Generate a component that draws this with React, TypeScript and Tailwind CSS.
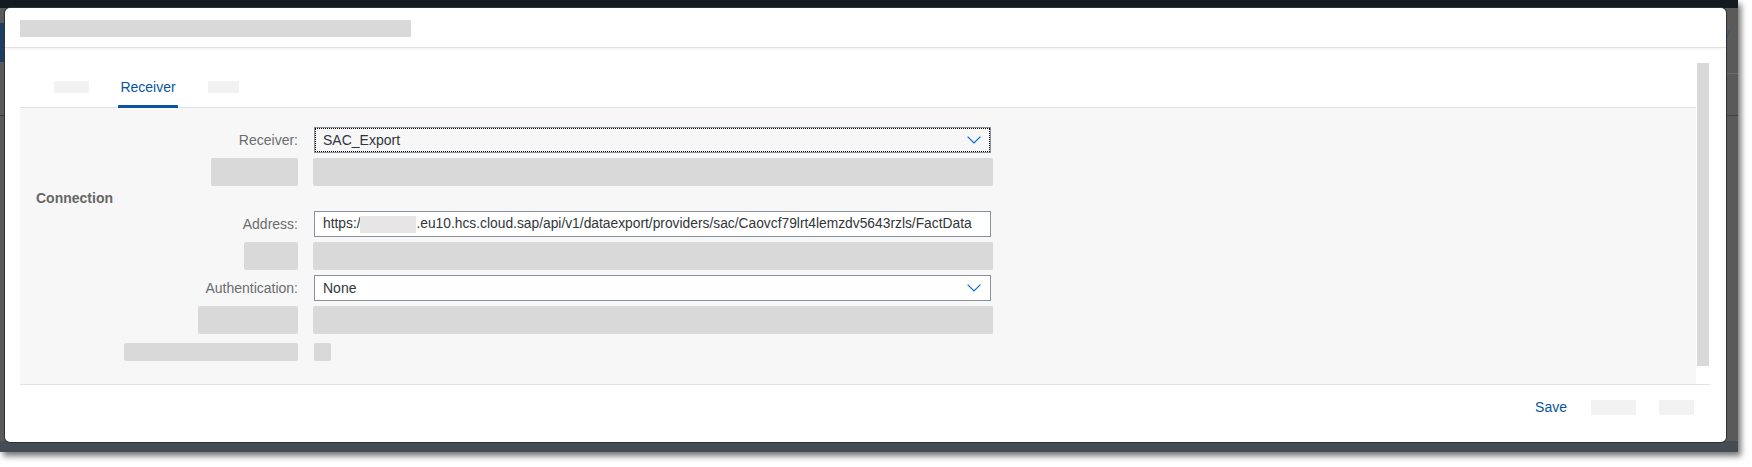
import React from "react"

const ph = "bg-[#d9d9d9] rounded-[2px]"

function Chevron() {
  return (
    <svg width="14" height="8" viewBox="0 0 14 8" className="shrink-0">
      <path d="M0.6 0.6 L7 7 L13.4 0.6" fill="none" stroke="#0a6ed1" strokeWidth="1.2" />
    </svg>
  )
}

function Label({ text }: { text: string }) {
  return <div className="justify-self-end text-[#6a6d70] leading-none">{text}</div>
}

function PlaceholderRow({ labelW, className = "" }: { labelW: string; className?: string }) {
  return (
    <div className={"grid grid-cols-[278px_677px] gap-x-4 items-center h-[28px] " + className}>
      <div className={"justify-self-end h-[28px] " + labelW + " " + ph} />
      <div className={"-ml-px w-[680px] h-[28px] " + ph} />
    </div>
  )
}

export default function App() {
  return (
    <div className="w-[1752px] h-[467px] bg-white overflow-hidden font-['Liberation_Sans',Arial,sans-serif]">
      <div className="relative w-[1738px] h-[452px] bg-[#5a5a5a] shadow-[3px_4px_6px_rgba(0,0,0,0.55)]">
        <div className="h-[8px] bg-[#131a22]" />

        {/* app behind the dialog */}
        <div className="absolute left-0 top-[23px] w-[6px] h-[39px] bg-[#1f3d60]" />
        <div className="absolute left-0 top-[115px] w-[6px] h-px bg-[#3a3a3a]" />
        <div className="absolute right-0 top-[73px] w-[14px] h-px bg-[#6c6c6c]" />
        <div className="absolute right-0 top-[115px] w-[14px] h-px bg-[#404040]" />
        <span className="absolute left-[1722px] top-[22px] text-[16px] text-[#32557e]">y</span>
        <div className="absolute left-0 right-0 bottom-0 h-[11px] bg-[#454d54]" />

        {/* dialog */}
        <div className="absolute left-[5px] top-[8px] w-[1721px] h-[434px] bg-white rounded-[5px] ring-1 ring-[#2c3136] flex flex-col overflow-hidden">
          <div className="relative z-10 h-[40px] shrink-0 border-b border-[#e2e2e2] pl-[15px] pt-[12px] shadow-[0_1px_3px_rgba(0,0,0,0.06)]">
            <div className="w-[391px] h-[17px] bg-[#d9d9d9]" />
          </div>

          <div className="flex flex-1 pl-[15px] pr-[17px]">
            <div className="w-[1676px] flex flex-col">
              {/* tabs */}
              <div className="h-[60px] shrink-0 border-b border-[#e2e2e2] flex items-end pl-[34px] text-[14px]">
                <div className="h-[40px] flex items-center">
                  <div className="w-[35px] h-[12px] bg-[#f2f2f2]" />
                </div>
                <div className="relative ml-[29px] h-[40px] w-[60px] flex items-center justify-center text-[#0854a0]">
                  Receiver
                  <div className="absolute left-0 right-0 -bottom-px h-[3px] bg-[#0854a0] rounded-t-[1px]" />
                </div>
                <div className="ml-[30px] h-[40px] flex items-center">
                  <div className="w-[31px] h-[12px] bg-[#f2f2f2]" />
                </div>
              </div>

              {/* form */}
              <div className="flex-1 bg-[#f7f7f7] pt-[19px] flex flex-col text-[14px] text-[#32363a]">
                <div className="grid grid-cols-[278px_677px] gap-x-4 items-center h-[26px]">
                  <Label text="Receiver:" />
                  <div className="h-[26px] border border-[#89919a] bg-[#f7f7f7] outline-1 outline-dotted outline-black -outline-offset-2 pl-[8px] pr-[9px] flex items-center justify-between">
                    <span>SAC_Export</span>
                    <Chevron />
                  </div>
                </div>

                <PlaceholderRow labelW="w-[87px]" className="mt-[5px]" />

                <div className="h-[25px] flex items-center pl-[16px] font-bold text-[#666666]">Connection</div>

                <div className="grid grid-cols-[278px_677px] gap-x-4 items-center h-[26px]">
                  <Label text="Address:" />
                  <div className="h-[26px] border border-[#89919a] bg-white pl-[8px] flex items-center whitespace-nowrap overflow-hidden text-[13.8px]">
                    <span>https://</span>
                    <span className="inline-block -ml-[4px] w-[56px] h-[17px] bg-[#e6e6e6]" />
                    <span>.eu10.hcs.cloud.sap/api/v1/dataexport/providers/sac/Caovcf79lrt4lemzdv5643rzls/FactData</span>
                  </div>
                </div>

                <PlaceholderRow labelW="w-[54px]" className="mt-[5px]" />

                <div className="grid grid-cols-[278px_677px] gap-x-4 items-center h-[26px] mt-[5px]">
                  <Label text="Authentication:" />
                  <div className="h-[26px] border border-[#89919a] bg-white pl-[8px] pr-[9px] flex items-center justify-between">
                    <span>None</span>
                    <Chevron />
                  </div>
                </div>

                <PlaceholderRow labelW="w-[100px]" className="mt-[5px]" />

                <div className="grid grid-cols-[278px_677px] gap-x-4 items-center h-[18px] mt-[9px]">
                  <div className={"justify-self-end w-[174px] h-[18px] " + ph} />
                  <div className={"w-[17px] h-[18px] " + ph} />
                </div>
              </div>
            </div>

            <div className="w-[12px] ml-px mt-[15px] mb-[18px] bg-[#d9d9d9]" />
          </div>

          {/* footer */}
          <div className="h-[58px] shrink-0 ml-[15px] mr-[16px] border-t border-[#e2e2e2] flex justify-end items-start pt-[15px] pr-[16px] text-[14px]">
            <span className="h-[15px] leading-[15px] text-[#0854a0]">Save</span>
            <div className="ml-[24px] w-[45px] h-[15px] bg-[#f2f2f2]" />
            <div className="ml-[23px] w-[35px] h-[15px] bg-[#f2f2f2]" />
          </div>
        </div>
      </div>
    </div>
  )
}
